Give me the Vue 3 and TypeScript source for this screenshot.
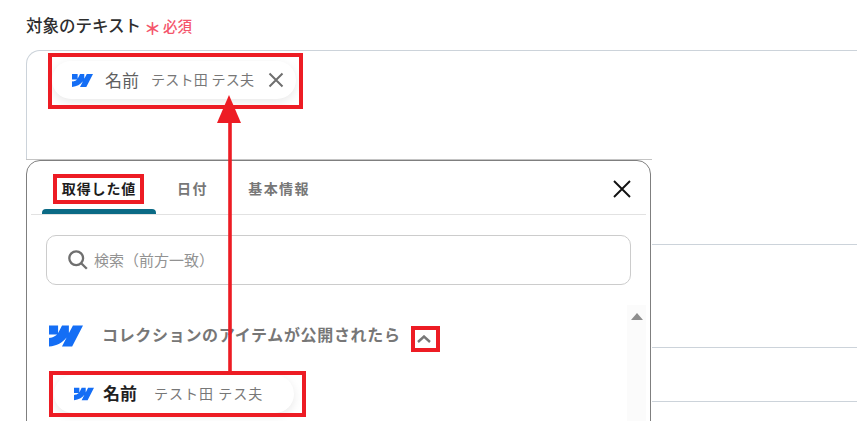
<script setup lang="ts">
const tabs: string[] = ['取得した値', '日付', '基本情報']
const logo = 'M24 4.515l-7.658 14.97H9.149l3.205-6.204h-.144C9.566 16.713 5.621 18.973 0 19.485v-6.118s3.596-.213 5.71-2.435H0V4.515h6.417v5.278l.144-.001 2.622-5.277h4.854v5.244h.144l2.72-5.244H24z'
</script>

<template>
  <div class="page">
    <div class="label">
      <span class="label-text">対象のテキスト</span>
      <span class="star">＊</span>
      <span class="required">必須</span>
    </div>

    <div class="field">
      <div class="chip chip-top">
        <svg class="chip-logo" viewBox="0 0 24 24"><path :d="logo" /></svg>
        <span class="chip-name">名前</span>
        <span class="chip-value">テスト田 テス夫</span>
        <svg class="chip-x" viewBox="0 0 16 16"><path d="M1.5 1.5l13 13M14.5 1.5l-13 13" /></svg>
      </div>
    </div>
    <div class="field-foot"></div>
    <div class="rule rule-a"></div>
    <div class="rule rule-b"></div>
    <div class="rule rule-c"></div>

    <section class="modal">
      <header class="tabs">
        <button v-for="(t, i) in tabs" :key="t" class="tab" :class="{ active: i === 0 }">{{ t }}</button>
        <svg class="close" viewBox="0 0 18 18"><path d="M1 1l16 16M17 1L1 17" /></svg>
      </header>
      <div class="search">
        <svg class="search-icon" viewBox="0 0 20 20"><circle cx="8.2" cy="8.2" r="6.9" /><path d="M13.2 13.2l5.6 5.6" /></svg>
        <span class="placeholder">検索（前方一致）</span>
      </div>
      <div class="list">
        <div class="list-main">
          <div class="group">
            <svg class="group-logo" viewBox="0 4.5 24 15"><path :d="logo" /></svg>
            <span class="group-title">コレクションのアイテムが公開されたら</span>
            <svg class="chevron" viewBox="0 0 14 8"><path d="M1 7l6-5.5L13 7" /></svg>
          </div>
          <div class="chip chip-bottom">
            <svg class="chip-logo small" viewBox="0 0 24 24"><path :d="logo" /></svg>
            <span class="chip-name strong">名前</span>
            <span class="chip-value wide">テスト田 テス夫</span>
          </div>
        </div>
        <div class="scrollbar"><i class="scroll-up"></i></div>
      </div>
    </section>

    <svg class="marks" viewBox="0 0 857 421">
      <g fill="none" stroke="#ed1c24" stroke-width="4">
        <rect x="50" y="55" width="251" height="52" />
        <rect x="55" y="176" width="87" height="26" />
        <rect x="413" y="328" width="25" height="22" />
        <rect x="51" y="373" width="253" height="42" />
      </g>
      <path d="M230 120V373" stroke="#ed1c24" stroke-width="3.6" />
      <path d="M229 95L241 123H217z" fill="#ed1c24" />
    </svg>
  </div>
</template>

<style>
html, body { margin: 0; background: #fff; }
</style>

<style scoped>
.page {
  position: relative;
  width: 857px;
  height: 421px;
  overflow: hidden;
  box-sizing: border-box;
  padding-top: 13px;
  background: #fff;
  font-family: "Noto Sans CJK JP", "Noto Sans", sans-serif;
  color: #333;
}
.label {
  display: flex;
  align-items: center;
  height: 24px;
  margin-bottom: 13px;
  padding-left: 26px;
}
.label-text { width: 118px; font-size: 16.5px; font-weight: 500; color: #2e2e2e; white-space: nowrap; }
.star { width: 19px; margin-top: 5px; font-size: 17px; line-height: 18px; font-weight: 700; color: #f4566c; }
.required { margin-top: 1px; font-size: 14.5px; font-weight: 500; color: #f4566c; }
.field {
  box-sizing: border-box;
  height: 109px;
  margin-left: 26px;
  padding: 10px 0 0 25px;
  border-top: 1px solid #ccd3da;
  border-left: 1px solid #ccd3da;
  border-top-left-radius: 14px;
}
.field-foot { width: 626px; height: 1px; margin-left: 26px; background: #c4c4c4; }
.rule { height: 1px; margin-left: 652px; background: #ccd3da; }
.rule-a { margin-top: 84px; }
.rule-b { margin-top: 102px; }
.rule-c { margin-top: 53px; }
.chip {
  display: flex;
  align-items: center;
  box-sizing: border-box;
  background: #fff;
  border-radius: 20px;
  box-shadow: 0 3px 10px rgba(0, 0, 0, .09);
}
.chip-top { width: 244px; height: 38px; padding-left: 20px; }
.chip-bottom { width: 240px; height: 38px; margin: 28px 0 0 27px; padding-left: 20px; }
.chip-logo { width: 21px; height: 21px; fill: #146ef5; flex: none; }
.chip-logo.small { width: 20px; height: 20px; }
.chip-name { margin-left: 12px; padding-bottom: 2px; font-size: 17px; color: #5f5f5f; }
.chip-name.strong { margin-left: 9px; padding-bottom: 3px; font-weight: 700; color: #1f1f1f; }
.chip-value { margin-left: 12px; padding-bottom: 2px; font-size: 14px; color: #777; letter-spacing: .28px; white-space: nowrap; }
.chip-value.wide { margin-left: 17px; letter-spacing: 1px; }
.chip-x { width: 16px; height: 16px; margin-left: 14px; fill: none; stroke: #6f6f6f; stroke-width: 2; flex: none; }
.modal {
  position: absolute;
  left: 26px;
  top: 160px;
  box-sizing: border-box;
  width: 625px;
  height: 280px;
  background: #fff;
  border: 1px solid #7f7f7f;
  border-radius: 14px 14px 0 0;
}
.tabs {
  display: flex;
  align-items: center;
  box-sizing: border-box;
  height: 54px;
  margin: 0 4px;
  padding-left: 11px;
  border-bottom: 1px solid #e2e2e2;
}
.tab {
  position: relative;
  align-self: stretch;
  padding: 0 19.5px 0 21px;
  border: 0;
  background: none;
  font: 700 14px "Noto Sans CJK JP", sans-serif;
  letter-spacing: 1.4px;
  color: #777;
  white-space: nowrap;
}
.tab.active {
  width: 114px;
  padding: 0;
  letter-spacing: .9px;
  color: #1d1d1d;
}
.tab.active::after {
  content: "";
  position: absolute;
  left: 0;
  right: 0;
  bottom: 0;
  height: 5px;
  border-radius: 4px 4px 0 0;
  background: #0b6a85;
}
.close { width: 18px; height: 18px; margin: 2px 15px 0 auto; fill: none; stroke: #111; stroke-width: 1.9; }
.search {
  display: flex;
  align-items: center;
  box-sizing: border-box;
  height: 50px;
  margin: 20px 19px 0;
  padding-left: 21px;
  border: 1px solid #ccc;
  border-radius: 10px;
  font-size: 15px;
  color: #929292;
}
.placeholder { padding-bottom: 2px; }
.search-icon { width: 20px; height: 20px; margin-right: 6px; fill: none; stroke: #6f6f6f; stroke-width: 2.3; }
.list { display: flex; height: 140px; margin: 20px 4px 0 0; }
.list-main { flex: 1; }
.group { display: flex; align-items: center; height: 22px; margin-top: 20px; padding-left: 22px; }
.group-logo { width: 34px; height: 22px; fill: #146ef5; flex: none; }
.group-title { margin-left: 19px; padding-bottom: 4px; font-size: 16px; font-weight: 700; letter-spacing: .68px; color: #777; white-space: nowrap; }
.chevron { width: 14px; height: 8px; margin: 6px 0 0 16px; fill: none; stroke: #777; stroke-width: 2.4; }
.scrollbar { display: flex; justify-content: center; width: 19px; background: #fbfbfb; }
.scroll-up {
  width: 0;
  height: 0;
  margin-top: 8px;
  border-left: 6.5px solid transparent;
  border-right: 6.5px solid transparent;
  border-bottom: 7px solid #8e8e8e;
}
.marks { position: absolute; left: 0; top: 0; width: 857px; height: 421px; pointer-events: none; }
</style>
